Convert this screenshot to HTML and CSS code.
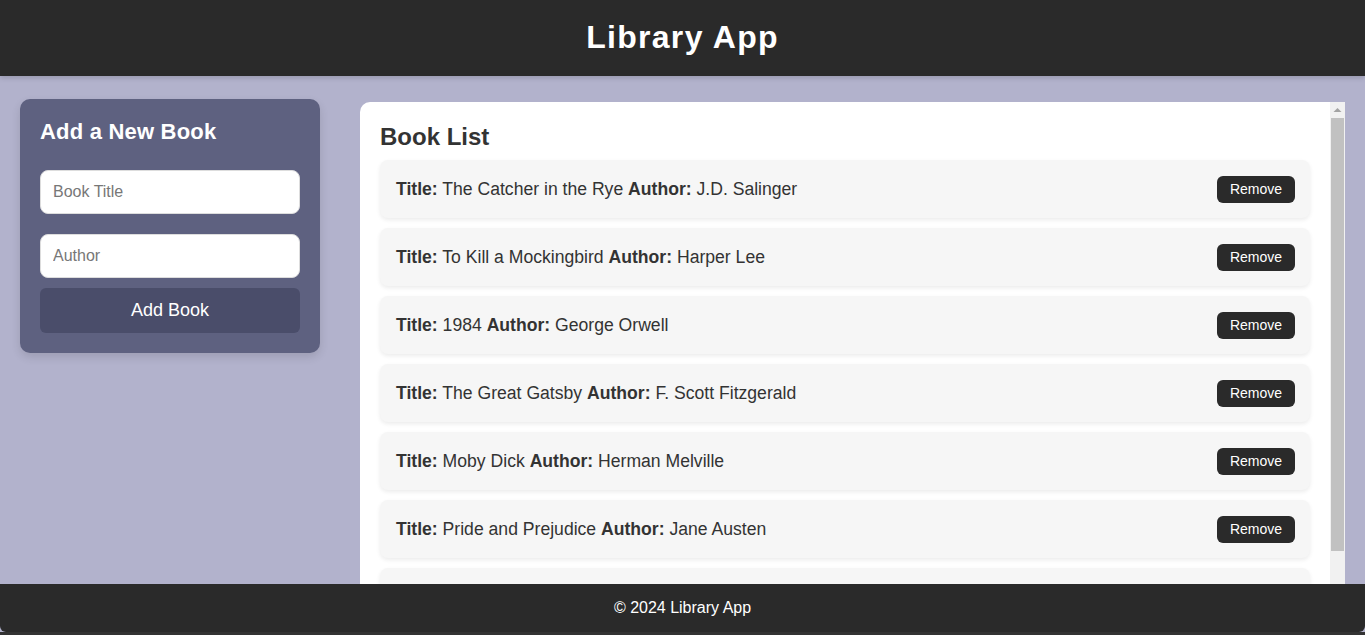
FILE: index.html
```html
<!DOCTYPE html>
<html lang="en">
<head>
<meta charset="utf-8">
<title>Library App</title>
<link rel="stylesheet" href="styles.css">
</head>
<body>
<header class="app-header">
  <h1>Library App</h1>
</header>
<main class="layout">
  <aside class="form-card">
    <h2>Add a New Book</h2>
    <input class="field" type="text" placeholder="Book Title">
    <input class="field" type="text" placeholder="Author">
    <button class="add-btn" type="button">Add Book</button>
  </aside>
  <section class="book-panel">
    <div class="panel-content">
      <h2>Book List</h2>
      <ul class="book-list">
        <li class="book"><span><b>Title:</b> The Catcher in the Rye <b>Author:</b> J.D. Salinger</span><button class="remove" type="button">Remove</button></li>
        <li class="book"><span><b>Title:</b> To Kill a Mockingbird <b>Author:</b> Harper Lee</span><button class="remove" type="button">Remove</button></li>
        <li class="book"><span><b>Title:</b> 1984 <b>Author:</b> George Orwell</span><button class="remove" type="button">Remove</button></li>
        <li class="book"><span><b>Title:</b> The Great Gatsby <b>Author:</b> F. Scott Fitzgerald</span><button class="remove" type="button">Remove</button></li>
        <li class="book"><span><b>Title:</b> Moby Dick <b>Author:</b> Herman Melville</span><button class="remove" type="button">Remove</button></li>
        <li class="book"><span><b>Title:</b> Pride and Prejudice <b>Author:</b> Jane Austen</span><button class="remove" type="button">Remove</button></li>
        <li class="book"><span><b>Title:</b> War and Peace <b>Author:</b> Leo Tolstoy</span><button class="remove" type="button">Remove</button></li>
      </ul>
    </div>
    <div class="scrollbar" aria-hidden="true">
      <div class="sb-arrow"><svg width="15" height="16" viewBox="0 0 15 16"><path d="M3.5 10h8L7.5 6z" fill="#a3a3a3"/></svg></div>
      <div class="sb-thumb"></div>
      <div class="sb-rest"></div>
    </div>
  </section>
</main>
<footer class="app-footer">© 2024 Library App</footer>
</body>
</html>
```
FILE: styles.css
```css
* { box-sizing: border-box; }
html {
  background: #333333;
  height: 100%;
}
body {
  margin: 0;
  height: calc(100vh - 3px);
  overflow: hidden;
  background: #b2b2cc;
  font-family: "Liberation Sans", Arial, sans-serif;
  color: #333;
}
.app-header {
  position: relative;
  z-index: 2;
  height: 76px;
  background: #2a2a2a;
  display: flex;
  align-items: center;
  justify-content: center;
  box-shadow: 0 2px 5px rgba(0,0,0,0.15);
}
.app-header h1 {
  margin: 0 0 2px;
  color: #fff;
  font-size: 32px;
  font-weight: bold;
  letter-spacing: 1.3px;
}
.layout {
  display: flex;
  align-items: flex-start;
  gap: 40px;
  padding: 23px 20px 0 20px;
}
.form-card {
  width: 300px;
  flex: none;
  background: #5e6180;
  border-radius: 10px;
  padding: 20px;
  box-shadow: 0 4px 10px rgba(0,0,0,0.12);
  display: flex;
  flex-direction: column;
}
.form-card h2 {
  margin: 0 0 26px;
  color: #fff;
  font-size: 22px;
  font-weight: bold;
  line-height: 25px;
  letter-spacing: 0.2px;
}
.field {
  height: 44px;
  border: 1px solid #ddd;
  border-radius: 8px;
  padding: 0 12px;
  font-family: "Liberation Sans", Arial, sans-serif;
  font-size: 16px;
  color: #333;
  background: #fff;
  margin-bottom: 20px;
}
.field + .field { margin-bottom: 10px; }
.field::placeholder { color: #777; }
.add-btn {
  height: 45px;
  border: none;
  border-radius: 6px;
  background: #4a4d6a;
  color: #fff;
  font-family: "Liberation Sans", Arial, sans-serif;
  font-size: 18px;
}
.book-panel {
  flex: 1;
  margin-top: 3px;
  height: 482px;
  background: #fff;
  border-radius: 10px 0 0 0;
  overflow: hidden;
  display: flex;
}
.panel-content {
  flex: 1;
  min-width: 0;
  padding: 20px;
  overflow: hidden;
}
.book-panel h2 {
  margin: 0 0 8px;
  font-size: 24px;
  line-height: 30px;
  font-weight: bold;
  color: #333;
}
.book-list {
  list-style: none;
  margin: 0;
  padding: 0;
  display: flex;
  flex-direction: column;
  gap: 10px;
}
.book {
  height: 58px;
  flex: none;
  display: flex;
  align-items: center;
  justify-content: space-between;
  background: #f6f6f6;
  border-radius: 8px;
  padding: 0 15px 0 16px;
  box-shadow: 0 2px 4px rgba(0,0,0,0.08);
  font-size: 17.6px;
  color: #333;
}
.remove {
  height: 27px;
  width: 78px;
  border: none;
  border-radius: 6px;
  background: #2a2a2a;
  color: #fff;
  font-family: "Liberation Sans", Arial, sans-serif;
  font-size: 14px;
  padding: 0;
}
.scrollbar {
  width: 15px;
  flex: none;
  background: #f1f1f1;
  display: flex;
  flex-direction: column;
}
.sb-arrow {
  height: 16px;
  flex: none;
}
.sb-arrow svg { display: block; }
.sb-thumb {
  height: 433px;
  flex: none;
  margin: 0 1px;
  background: #c1c1c1;
}
.sb-rest { flex: 1; }
.app-footer {
  position: fixed;
  left: 0;
  right: 0;
  bottom: 3px;
  height: 48px;
  z-index: 3;
  background: #2a2a2a;
  color: #fff;
  font-size: 16px;
  display: flex;
  align-items: center;
  justify-content: center;
  border-radius: 0 0 6px 6px;
}
```
